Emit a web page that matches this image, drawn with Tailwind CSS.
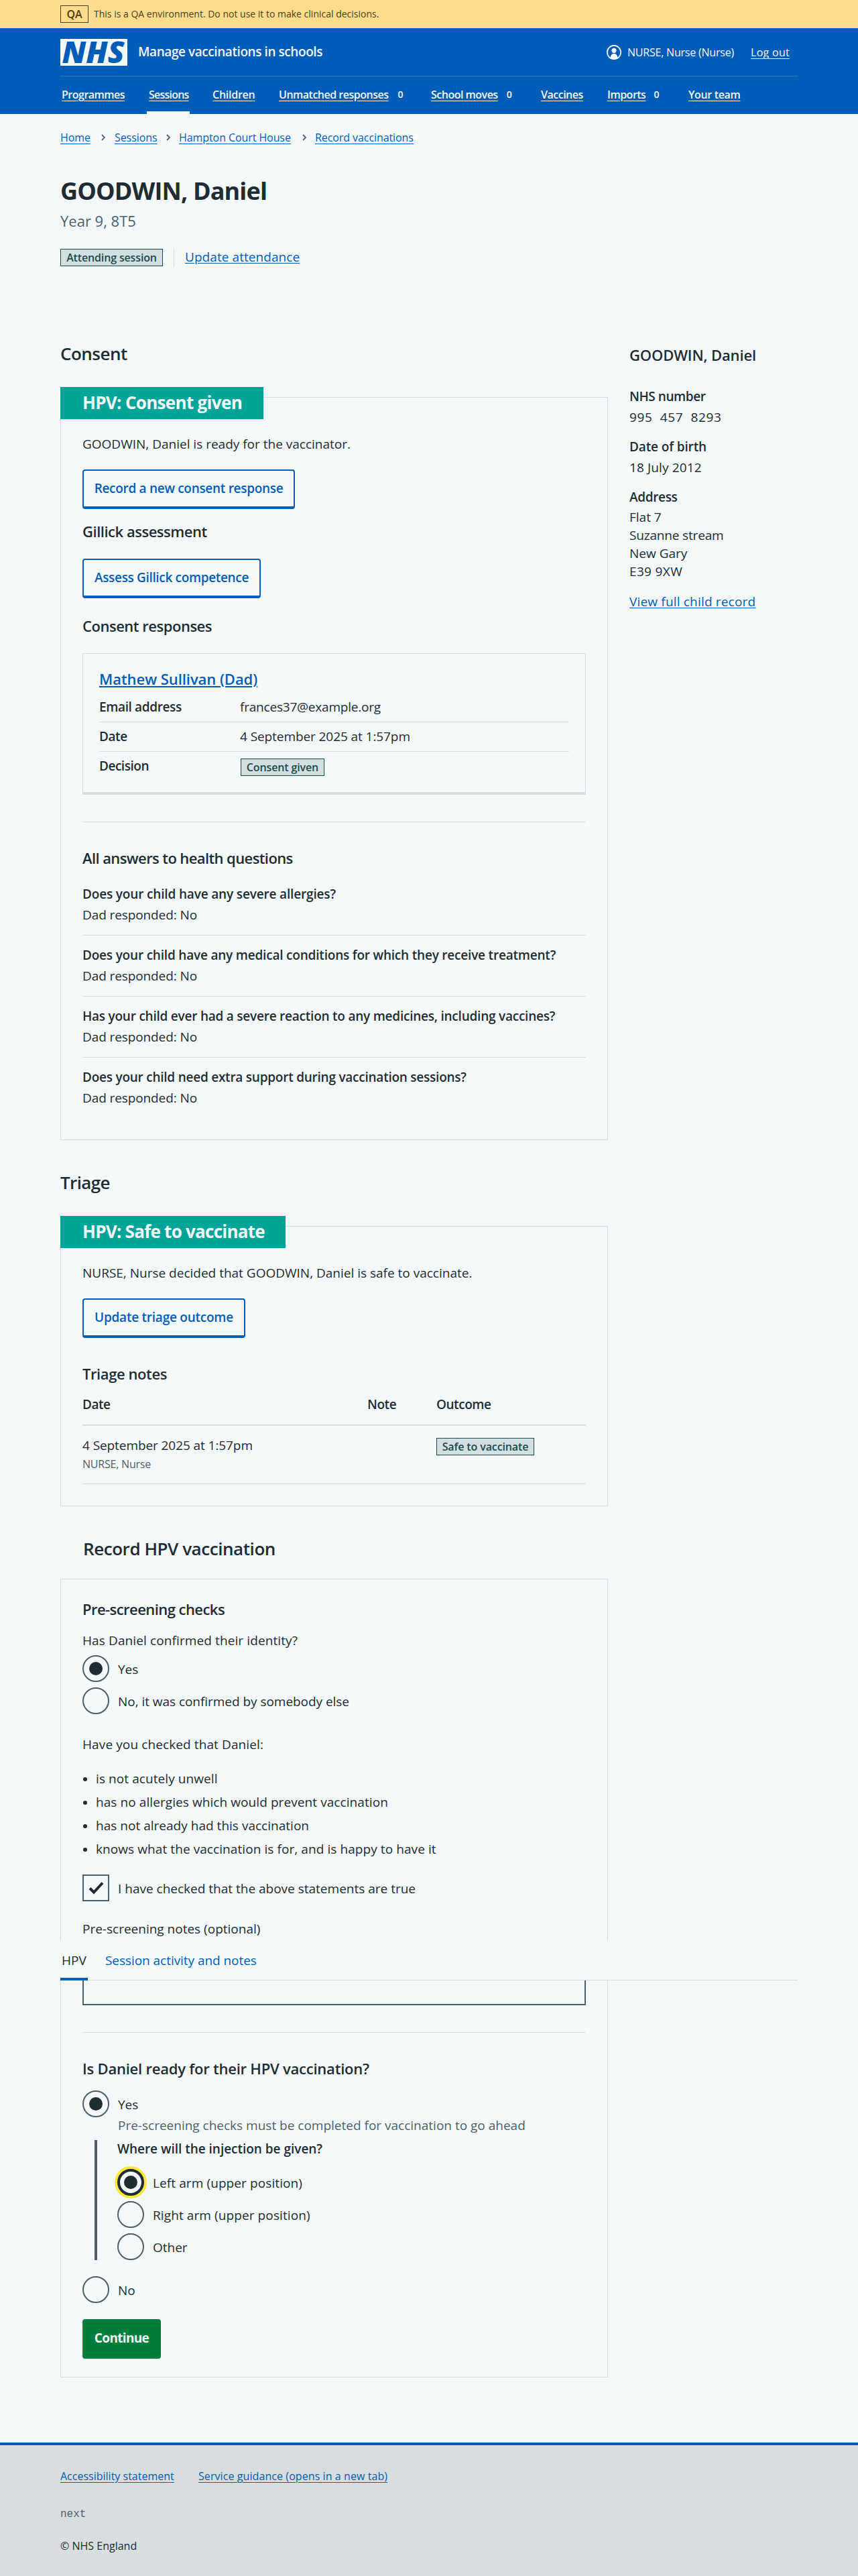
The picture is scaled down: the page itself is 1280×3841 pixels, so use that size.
<!DOCTYPE html>
<html lang="en">
<head>
<meta charset="utf-8">
<title>Manage vaccinations in schools</title>
<script src="https://cdn.jsdelivr.net/npm/@tailwindcss/browser@4"></script>
</head>
<body class="relative bg-[#f5f9fa] font-['Open_Sans','Noto_Sans',sans-serif] text-[19px] leading-[28px] text-[#212b32]">

<!-- Environment banner -->
<div class="h-[42px] bg-[#ffdc8e] px-[90px] flex items-center text-[#4d3c10]">
  <strong class="h-[26px] w-[42px] border border-[#4d3c10] flex items-center justify-center text-[16px] leading-[24px] font-semibold">QA</strong>
  <span class="ml-2 text-[14px] leading-[20px]">This is a QA environment. Do not use it to make clinical decisions.</span>
</div>

<!-- Header -->
<header class="h-[128px] bg-[#005cb6] px-[90px] text-[#f5f9fa] flex flex-col">
  <div class="h-[71px] pt-4 flex">
    <svg class="w-[100px] h-10 shrink-0" viewBox="0 0 100 40" role="img" aria-label="NHS">
      <rect width="100" height="40" fill="#f5f9fa"/>
      <text x="2.5" y="36" font-family="Open Sans" font-weight="800" font-style="italic" font-size="45" fill="#005cb6" textLength="93" lengthAdjust="spacingAndGlyphs">NHS</text>
    </svg>
    <span class="ml-4 mt-[5px] font-semibold tracking-[-0.43px] whitespace-nowrap">Manage vaccinations in schools</span>
    <div class="ml-auto flex text-[16px] leading-[24px] mt-[8px] mr-[12px]">
      <svg class="w-[22px] h-[22px] mt-px mr-[9px]" viewBox="0 0 22 22" fill="none">
        <circle cx="11" cy="11" r="10.1" stroke="#f5f9fa" stroke-width="1.7"/>
        <circle cx="11" cy="8.3" r="3.6" fill="#f5f9fa"/>
        <path d="M5.6 20 C5.4 15.6 7.6 12.9 11 12.9 C14.4 12.9 16.6 15.6 16.4 20 C14 21.6 8 21.6 5.6 20Z" fill="#f5f9fa"/>
      </svg>
      <span class="font-medium tracking-[-0.21px] w-[158px] whitespace-nowrap">NURSE, Nurse (Nurse)</span>
      <a class="ml-[26px] font-medium tracking-[0.3px] underline underline-offset-[3px] w-[58px] whitespace-nowrap">Log out</a>
    </div>
  </div>
  <nav class="h-[57px] border-t border-[#3079c4] flex text-[16px] leading-[24px] font-semibold tracking-[-0.5px] pt-[15px] whitespace-nowrap">
    <a class="w-[98px] mr-[31px] px-[2px]"><span class="underline underline-offset-[3px]">Programmes</span></a>
    <a class="w-[64px] mr-[32px] px-[3px] h-[41px] border-b-4 border-[#f5f9fa] tracking-[-0.78px]"><span class="underline underline-offset-[3px]">Sessions</span></a>
    <a class="w-[99px] px-[2px] tracking-[-0.25px]"><span class="underline underline-offset-[3px]">Children</span></a>
    <a class="w-[227px] px-[2px] flex"><span class="underline underline-offset-[3px]">Unmatched responses</span><span class="ml-[14px] text-[14px]">0</span></a>
    <a class="w-[164px] px-[2px] flex"><span class="underline underline-offset-[3px]">School moves</span><span class="ml-[13px] text-[14px]">0</span></a>
    <a class="w-[99px] px-[2px]"><span class="underline underline-offset-[3px]">Vaccines</span></a>
    <a class="w-[121px] px-[2px] flex"><span class="underline underline-offset-[3px]">Imports</span><span class="ml-[12px] text-[14px]">0</span></a>
    <a class="px-[2px] tracking-[-0.35px]"><span class="underline underline-offset-[3px]">Your team</span></a>
  </nav>
</header>

<main class="px-[90px] flex flex-col">
  <!-- Breadcrumbs -->
  <nav class="mt-[23px] flex items-center text-[16px] leading-[24px] tracking-[-0.08px] text-[#005cb6] whitespace-nowrap">
    <a class="w-[44px] underline underline-offset-[3px]">Home</a>
    <svg class="w-[37px] h-3" viewBox="0 0 37 12" fill="none"><path d="M18 2 L22 6 L18 10" stroke="#4c6272" stroke-width="1.8"/></svg>
    <a class="w-[60px] underline underline-offset-[3px]">Sessions</a>
    <svg class="w-[36px] h-3" viewBox="0 0 36 12" fill="none"><path d="M18 2 L22 6 L18 10" stroke="#4c6272" stroke-width="1.8"/></svg>
    <a class="w-[167px] underline underline-offset-[3px]">Hampton Court House</a>
    <svg class="w-[36px] h-3" viewBox="0 0 36 12" fill="none"><path d="M18 2 L22 6 L18 10" stroke="#4c6272" stroke-width="1.8"/></svg>
    <a class="underline underline-offset-[3px]">Record vaccinations</a>
  </nav>

  <h1 class="mt-[46px] text-[36px] leading-[44px] font-bold tracking-[-0.86px]">GOODWIN, Daniel</h1>
  <p class="mt-[6px] text-[22px] leading-[32px] text-[#4f5f69]">Year 9, 8T5</p>
  <div class="mt-[26px] h-[26px] flex items-center">
    <strong class="h-[26px] w-[153px] border border-[#1c4a4a] bg-[#d3dfe0] text-[#1c4a4a] flex items-center justify-center text-[16px] leading-[24px] font-semibold tracking-[-0.15px] whitespace-nowrap">Attending session</strong>
    <span class="ml-4 h-[27px] w-px bg-[#d8dde0]"></span>
    <a class="ml-4 -mt-[3px] text-[#005cb6] tracking-[0.07px] underline underline-offset-[2px]">Update attendance</a>
  </div>

  <div class="mt-[114px] flex">
    <div class="w-[817px] shrink-0 flex flex-col">
      <h2 class="text-[26px] leading-[32px] font-semibold tracking-[-0.5px]">Consent</h2>

      <!-- Consent card -->
      <section class="mt-[49px] border border-[#d8dde0] px-8 pb-12 flex flex-col items-start">
        <h3 class="-mt-4 -ml-[33px] h-12 w-[303px] bg-[#00a499] text-[#f5f9fa] pl-[33px] pt-[7px] text-[26px] leading-[32px] font-bold tracking-[-0.68px] whitespace-nowrap">HPV: Consent given</h3>
        <p class="mt-[23px]">GOODWIN, Daniel is ready for the vaccinator.</p>
        <button class="mt-6 h-[59px] w-[317px] rounded-[4px] border-2 border-b-4 border-[#005cb6] pb-[1px] text-[#005cb6] font-semibold tracking-[-0.3px] whitespace-nowrap">Record a new consent response</button>
        <h4 class="mt-[17px] text-[22px] leading-[32px] font-semibold tracking-[-0.48px]">Gillick assessment</h4>
        <button class="mt-[25px] h-[59px] w-[266px] rounded-[4px] border-2 border-b-4 border-[#005cb6] pb-[1px] text-[#005cb6] font-semibold tracking-[-0.34px] whitespace-nowrap">Assess Gillick competence</button>
        <h4 class="mt-[25px] text-[22px] leading-[32px] font-semibold tracking-[-0.48px]">Consent responses</h4>

        <div class="mt-[25px] w-full border border-b-4 border-[#d8dde0] px-6 pt-[21px] pb-[25px]">
          <h5 class="text-[22px] leading-[32px] font-semibold tracking-[-0.05px] text-[#005cb6]"><a class="underline underline-offset-[2px]">Mathew Sullivan (Dad)</a></h5>
          <dl class="mt-[5px]">
            <div class="flex pt-[7px] pb-2 border-b border-[#d8dde0]"><dt class="w-[210px] font-semibold tracking-[-0.37px]">Email address</dt><dd class="tracking-[-0.21px]">frances37@example.org</dd></div>
            <div class="flex pt-[7px] pb-2 border-b border-[#d8dde0]"><dt class="w-[210px] font-semibold tracking-[-0.43px]">Date</dt><dd class="tracking-[-0.08px]">4 September 2025 at 1:57pm</dd></div>
            <div class="flex pt-[7px] h-[35px]"><dt class="w-[211px] font-semibold tracking-[-0.48px]">Decision</dt><dd class="mt-[3px] h-[26px] w-[125px] border border-[#1c4a4a] bg-[#d3dfe0] text-[#1c4a4a] flex items-center justify-center text-[16px] leading-[24px] font-semibold tracking-[-0.13px] whitespace-nowrap">Consent given</dd></div>
          </dl>
        </div>

        <hr class="mt-10 w-full border-[#d8dde0]">
        <h4 class="mt-[37px] text-[22px] leading-[32px] font-semibold tracking-[-0.6px]">All answers to health questions</h4>
        <dl class="mt-6 w-full flex flex-col">
          <dt class="font-semibold tracking-[-0.16px]">Does your child have any severe allergies?</dt>
          <dd class="mt-[3px] pb-4 border-b border-[#d8dde0] tracking-[-0.1px]">Dad responded: No</dd>
          <dt class="mt-[15px] font-semibold tracking-[-0.2px]">Does your child have any medical conditions for which they receive treatment?</dt>
          <dd class="mt-[3px] pb-4 border-b border-[#d8dde0] tracking-[-0.1px]">Dad responded: No</dd>
          <dt class="mt-[15px] font-semibold tracking-[-0.23px]">Has your child ever had a severe reaction to any medicines, including vaccines?</dt>
          <dd class="mt-[3px] pb-4 border-b border-[#d8dde0] tracking-[-0.1px]">Dad responded: No</dd>
          <dt class="mt-[15px] font-semibold tracking-[-0.24px]">Does your child need extra support during vaccination sessions?</dt>
          <dd class="mt-[3px] tracking-[-0.1px]">Dad responded: No</dd>
        </dl>
      </section>

      <h2 class="mt-[47px] text-[26px] leading-[32px] font-semibold tracking-[-0.61px]">Triage</h2>

      <!-- Triage card -->
      <section class="mt-[49px] border border-[#d8dde0] px-8 pb-8 flex flex-col items-start">
        <h3 class="-mt-4 -ml-[33px] h-12 w-[336px] bg-[#00a499] text-[#f5f9fa] pl-[33px] pt-[7px] text-[26px] leading-[32px] font-bold tracking-[-0.74px] whitespace-nowrap">HPV: Safe to vaccinate</h3>
        <p class="mt-[23px]">NURSE, Nurse decided that GOODWIN, Daniel is safe to vaccinate.</p>
        <button class="mt-6 h-[59px] w-[243px] rounded-[4px] border-2 border-b-4 border-[#005cb6] pb-[1px] text-[#005cb6] font-semibold tracking-[-0.24px] whitespace-nowrap">Update triage outcome</button>
        <h4 class="mt-[37px] text-[22px] leading-[32px] font-semibold tracking-[-0.41px]">Triage notes</h4>
        <div class="mt-4 w-full grid grid-cols-[425px_103px_1fr] pb-4 border-b-2 border-[#d8dde0] font-semibold tracking-[-0.45px]">
          <span>Date</span><span>Note</span><span>Outcome</span>
        </div>
        <div class="w-full grid grid-cols-[528px_1fr] pt-[15px] pb-[17px] border-b border-[#d8dde0]">
          <div>
            <p class="tracking-[-0.08px]">4 September 2025 at 1:57pm</p>
            <p class="mt-[2px] text-[16px] leading-[24px] tracking-[-0.21px] text-[#4f5f69]">NURSE, Nurse</p>
          </div>
          <strong class="mt-[3px] h-[26px] w-[146px] border border-[#1c4a4a] bg-[#d3dfe0] text-[#1c4a4a] flex items-center justify-center text-[16px] leading-[24px] font-semibold tracking-[-0.12px] whitespace-nowrap">Safe to vaccinate</strong>
        </div>
      </section>

      <h2 class="mt-[47px] ml-[34px] text-[26px] leading-[32px] font-semibold tracking-[-0.44px]">Record HPV vaccination</h2>

      <!-- Vaccination form -->
      <form class="mt-[29px] border border-[#d8dde0] px-8 pt-7 pb-[27px] flex flex-col items-start">
        <h3 class="text-[22px] leading-[32px] font-semibold tracking-[-0.55px]">Pre-screening checks</h3>
        <p class="mt-[17px] tracking-[0.11px]">Has Daniel confirmed their identity?</p>
        <label class="mt-2 flex gap-[13px]"><span class="size-10 rounded-full border-2 border-[#4f5f69] flex items-center justify-center"><span class="size-5 rounded-full bg-[#212b32]"></span></span><span class="mt-[7px]">Yes</span></label>
        <label class="mt-2 flex gap-[13px]"><span class="size-10 rounded-full border-2 border-[#4f5f69]"></span><span class="mt-[7px] tracking-[-0.04px]">No, it was confirmed by somebody else</span></label>
        <p class="mt-[31px] tracking-[0.11px]">Have you checked that Daniel:</p>
        <ul class="mt-[23px] flex flex-col gap-[7px] tracking-[0.08px]">
          <li class="flex"><span class="ml-px mt-[12px] mr-[13px] size-[6px] rounded-full bg-[#212b32]"></span>is not acutely unwell</li>
          <li class="flex"><span class="ml-px mt-[12px] mr-[13px] size-[6px] rounded-full bg-[#212b32]"></span>has no allergies which would prevent vaccination</li>
          <li class="flex tracking-[0.02px]"><span class="ml-px mt-[12px] mr-[13px] size-[6px] rounded-full bg-[#212b32]"></span>has not already had this vaccination</li>
          <li class="flex"><span class="ml-px mt-[12px] mr-[13px] size-[6px] rounded-full bg-[#212b32]"></span>knows what the vaccination is for, and is happy to have it</li>
        </ul>
        <label class="mt-6 flex gap-[13px]">
          <span class="size-10 border-2 border-[#4f5f69]"><svg class="size-9" viewBox="0 0 36 36" fill="none"><path d="M9 18.5 L15 24.5 L28 10.5" stroke="#212b32" stroke-width="4"/></svg></span>
          <span class="mt-[7px]">I have checked that the above statements are true</span>
        </label>
        <p class="mt-[27px]">Pre-screening notes (optional)</p>
        <div class="mt-1 h-24 w-full border-2 border-[#4f5f69]"></div>

        <hr class="mt-10 w-full border-[#d8dde0]">
        <h3 class="mt-[37px] text-[22px] leading-[32px] font-semibold tracking-[-0.22px]">Is Daniel ready for their HPV vaccination?</h3>
        <label class="mt-[17px] flex gap-[13px]"><span class="size-10 rounded-full border-2 border-[#4f5f69] flex items-center justify-center"><span class="size-5 rounded-full bg-[#212b32]"></span></span><span class="mt-[7px]">Yes</span></label>
        <p class="-mt-[2px] ml-[53px] text-[#4f5f69]">Pre-screening checks must be completed for vaccination to go ahead</p>
        <fieldset class="mt-2 ml-[18px] h-[179px] border-l-4 border-[#4f5f69] pl-[30px] flex flex-col">
          <p class="-mt-px font-semibold tracking-[-0.02px]">Where will the injection be given?</p>
          <label class="mt-4 flex gap-[13px]"><span class="size-10 rounded-full border-4 border-[#212b32] ring-4 ring-[#ffe938] flex items-center justify-center"><span class="size-5 rounded-full bg-[#212b32]"></span></span><span class="mt-[7px] tracking-[0.1px]">Left arm (upper position)</span></label>
          <label class="mt-2 flex gap-[13px]"><span class="size-10 rounded-full border-2 border-[#4f5f69]"></span><span class="mt-[7px] tracking-[0.1px]">Right arm (upper position)</span></label>
          <label class="mt-2 flex gap-[13px]"><span class="size-10 rounded-full border-2 border-[#4f5f69]"></span><span class="mt-[7px]">Other</span></label>
        </fieldset>
        <label class="mt-6 flex gap-[13px]"><span class="size-10 rounded-full border-2 border-[#4f5f69]"></span><span class="mt-[7px]">No</span></label>
        <button type="button" class="mt-6 h-[59px] w-[117px] rounded-[4px] bg-[#007f3b] pb-[3px] text-[#f5f9fa] font-bold tracking-[-0.66px]">Continue</button>
      </form>
    </div>

    <!-- Child summary -->
    <aside class="ml-[32px] pt-[2px] flex flex-col whitespace-nowrap">
      <h2 class="text-[22px] leading-[32px] font-semibold tracking-[-0.13px]">GOODWIN, Daniel</h2>
      <h3 class="mt-8 font-semibold tracking-[-0.43px]">NHS number</h3>
      <p class="mt-[3px] tracking-[0.65px]">995&nbsp; 457&nbsp; 8293</p>
      <h3 class="mt-4 font-semibold tracking-[-0.13px]">Date of birth</h3>
      <p class="mt-[3px] tracking-[0.14px]">18 July 2012</p>
      <h3 class="mt-4 font-semibold tracking-[-0.34px]">Address</h3>
      <p class="mt-[3px] leading-[27px]">Flat 7<br><span class="tracking-[-0.17px]">Suzanne stream</span><br>New Gary<br><span class="tracking-[0.35px]">E39 9XW</span></p>
      <a class="mt-[17px] text-[#005cb6] tracking-[0.18px] underline underline-offset-[2px]">View full child record</a>
    </aside>
  </div>
</main>

<!-- Tabs stuck over the form -->
<nav class="absolute top-[2894px] left-[90px] w-[1100px] h-[59px] bg-[#f5f9fa] border-b border-[#d8dde0] flex whitespace-nowrap">
  <a class="w-[41px] h-[59px] pt-[15px] px-[2px] border-b-4 border-[#005cb6]">HPV</a>
  <a class="ml-[26px] pt-[15px] tracking-[-0.05px] text-[#005cb6]">Session activity and notes</a>
</nav>

<footer class="mt-[97px] h-[199px] border-t-4 border-[#005cb6] bg-[#d8dde0] px-[90px] pt-[34px] text-[16px] leading-[24px]">
  <div class="flex gap-[37px] text-[#005cb6]"><a class="w-[169px] whitespace-nowrap underline underline-offset-[3px]">Accessibility statement</a><a class="tracking-[0.08px] underline underline-offset-[3px]">Service guidance (opens in a new tab)</a></div>
  <p class="mt-[33px] font-['Liberation_Mono',monospace] text-[#4f5f69]">next</p>
  <p class="mt-[23px]">© NHS England</p>
</footer>
</body>
</html>
